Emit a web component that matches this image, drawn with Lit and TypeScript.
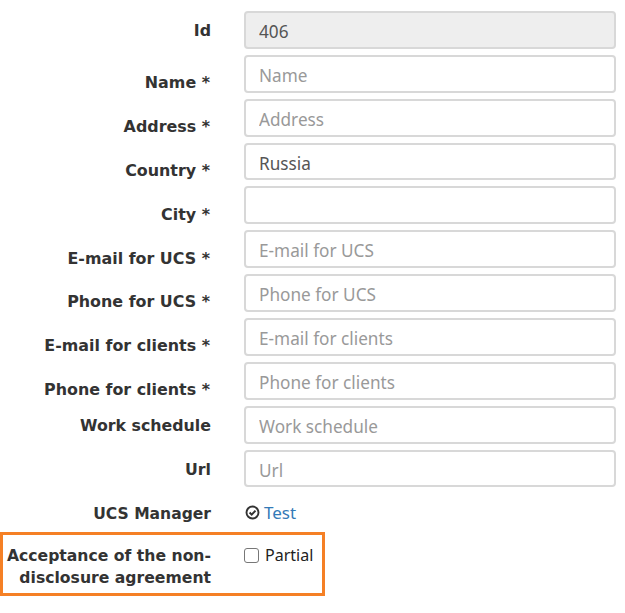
import { LitElement, html, css } from 'lit';
import { customElement } from 'lit/decorators.js';

type Field = { label: string; placeholder?: string; value?: string; disabled?: boolean; nudge?: boolean };

const FIELDS: Field[] = [
  { label: 'Id', value: '406', disabled: true },
  { label: 'Name *', placeholder: 'Name', nudge: true },
  { label: 'Address *', placeholder: 'Address', nudge: true },
  { label: 'Country *', value: 'Russia', nudge: true },
  { label: 'City *', nudge: true },
  { label: 'E-mail for UCS *', placeholder: 'E-mail for UCS', nudge: true },
  { label: 'Phone for UCS *', placeholder: 'Phone for UCS', nudge: true },
  { label: 'E-mail for clients *', placeholder: 'E-mail for clients', nudge: true },
  { label: 'Phone for clients *', placeholder: 'Phone for clients', nudge: true },
  { label: 'Work schedule', placeholder: 'Work schedule' },
  { label: 'Url', placeholder: 'Url' },
];

@customElement('app-root')
export class AppRoot extends LitElement {
  static styles = css`
    :host {
      display: block;
      width: 625px;
      height: 613px;
      background: #fff;
      font-family: 'DejaVu Sans', Verdana, sans-serif;
      color: #333;
      overflow: hidden;
    }

    .form {
      display: flex;
      flex-direction: column;
      gap: 6px;
      padding: 11px 9px 0 0;
    }

    .row {
      display: grid;
      grid-template-columns: 211px 372px;
      column-gap: 33px;
      height: 37.86px;
    }

    .label {
      font-size: 15.8px;
      font-weight: 700;
      line-height: 22px;
      text-align: right;
      padding-top: 9px;
      white-space: nowrap;
    }

    .label.nudge {
      font-size: 15.9px;
      padding-top: 17.3px;
      padding-right: 1px;
    }

    .label.manager-label {
      font-size: 15.55px;
      padding-top: 10px;
    }

    .control {
      box-sizing: border-box;
      width: 100%;
      height: 37.86px;
      padding: 3px 13px 0;
      border: 2px solid #d8d8d8;
      border-radius: 4px;
      background: #fff;
      font: 17.2px 'Noto Sans', sans-serif;
      color: #555;
      outline: none;
    }

    .control::placeholder {
      color: #999;
      opacity: 1;
    }

    .control:disabled {
      background: #eee;
    }

    .manager {
      display: flex;
      align-items: center;
      gap: 4px;
      height: 37.86px;
      font: 17px 'Noto Sans', sans-serif;
    }

    .manager a {
      color: #337ab7;
      text-decoration: none;
    }

    .manager svg {
      display: block;
      margin-left: 1px;
    }

    .acceptance {
      display: grid;
      grid-template-columns: 208px auto;
      column-gap: 33px;
      box-sizing: border-box;
      width: 325px;
      height: 64.7px;
      margin-top: 0.3px;
      padding-top: 10px;
      border: 3px solid #f58025;
    }

    .acceptance .label {
      font-size: 15.65px;
      padding: 0;
    }

    .check {
      display: flex;
      align-items: flex-start;
      gap: 6px;
      margin-top: -1px;
      font: 16px/22px 'Noto Sans', sans-serif;
      color: #222;
    }

    .box {
      box-sizing: border-box;
      width: 15px;
      height: 15px;
      margin-top: 4px;
      border: 1.5px solid #777;
      border-radius: 3px;
      background: #fff;
    }
  `;

  render() {
    return html`
      <div class="form">
        ${FIELDS.map(
          (f) => html`
            <div class="row">
              <div class="label ${f.nudge ? 'nudge' : ''}">${f.label}</div>
              <input
                class="control"
                .value=${f.value ?? ''}
                placeholder=${f.placeholder ?? ''}
                ?disabled=${f.disabled}
              />
            </div>
          `,
        )}
        <div class="row">
          <div class="label manager-label">UCS Manager</div>
          <div class="manager">
            <svg width="15" height="15" viewBox="0 0 15 15" fill="none" stroke="#333" stroke-width="1.9">
              <circle cx="7.5" cy="7.5" r="6"></circle>
              <path d="M4.6 7.5l2.1 2.1 3.8-4" stroke-width="2"></path>
            </svg>
            <a href="#">Test</a>
          </div>
        </div>
      </div>
      <div class="acceptance">
        <div class="label">Acceptance of the non-<br />disclosure agreement</div>
        <label class="check"><span class="box"></span>Partial</label>
      </div>
    `;
  }
}

declare global {
  interface HTMLElementTagNameMap {
    'app-root': AppRoot;
  }
}
